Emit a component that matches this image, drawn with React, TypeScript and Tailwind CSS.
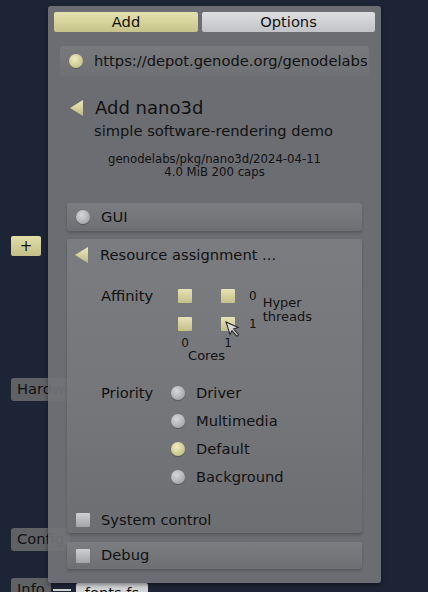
import React from "react";

const font = { fontFamily: '"DejaVu Sans", "Liberation Sans", sans-serif' };

function Triangle() {
  return (
    <svg width="13" height="16" viewBox="0 0 13 16" className="shrink-0">
      <defs>
        <linearGradient id="tri" x1="0" y1="0" x2="0" y2="1">
          <stop offset="0" stopColor="#eeeac0" />
          <stop offset="1" stopColor="#bdb982" />
        </linearGradient>
      </defs>
      <polygon points="13,0 13,16 0,8" fill="url(#tri)" />
    </svg>
  );
}

function Dot({ on }: { on?: boolean }) {
  return (
    <div
      className={
        "w-[14px] h-[14px] rounded-full shrink-0 shadow-[0_1px_1px_rgba(0,0,0,0.25)] " +
        (on
          ? "bg-[radial-gradient(circle_at_40%_35%,#f0ecc0,#c8c48c_70%,#aeaa74)]"
          : "bg-[radial-gradient(circle_at_40%_35%,#d6d7d9,#a9aaad_70%,#909194)]")
      }
    />
  );
}

function Square({ on }: { on?: boolean }) {
  return (
    <div
      className={
        "w-[14px] h-[14px] shrink-0 rounded-[1px] " +
        (on
          ? "bg-gradient-to-b from-[#e6e2b4] to-[#c4c08a]"
          : "bg-gradient-to-b from-[#cfd0d2] to-[#a3a4a7]")
      }
    />
  );
}

function Box({ className = "", children }: { className?: string; children: React.ReactNode }) {
  return (
    <div
      className={
        "mx-[19px] rounded-[3px] bg-gradient-to-b from-[#7b7c80] via-[#76777b] to-[#6d6e72] shadow-[0_2px_3px_rgba(0,0,0,0.2)] " +
        className
      }
    >
      {children}
    </div>
  );
}

function Cursor() {
  return (
    <svg width="14" height="20" viewBox="0 0 14 20" className="absolute left-[225px] top-[321px]">
      <polygon
        points="1,1 1,14 4,11 7,18 9,17 6,10 11,10"
        transform="rotate(-18 1 1)"
        fill="#d8d8d8"
        stroke="#222"
        strokeWidth="1"
      />
    </svg>
  );
}

export default function App() {
  const priorities = ["Driver", "Multimedia", "Default", "Background"];
  return (
    <div
      className="relative w-[428px] h-[592px] overflow-hidden bg-[#1d2435] text-[#111] text-[14.7px]"
      style={font}
    >
      {/* desktop items behind the dialog */}
      <div className="absolute left-[11px] top-[236px] w-[30px] h-[20px] rounded-[2px] bg-gradient-to-b from-[#e2dfaa] to-[#c2be86] flex items-center justify-center text-[15px] leading-none">
        +
      </div>
      <div className="absolute left-[11px] top-[378px] h-[23px] px-[6px] rounded-[3px] bg-[#606165] flex items-center">
        Hardware
      </div>
      <div className="absolute left-[11px] top-[528px] h-[23px] px-[6px] rounded-[3px] bg-[#606165] flex items-center">
        Config
      </div>
      <div className="absolute left-[11px] top-[578px] h-[23px] px-[6px] rounded-[3px] bg-[#606165] flex items-center">
        Info
      </div>
      <div className="absolute left-[53px] top-[589px] w-[18px] h-[2px] bg-[#d0d0d0]" />
      <div className="absolute left-[76px] top-[583px] w-[72px] h-[20px] rounded-[2px] bg-[#d3d4d6] flex items-center justify-center">
        fonts fs
      </div>

      {/* dialog */}
      <div className="absolute left-[48px] top-[6px] w-[333px] h-[577px] rounded-[3px] bg-[rgba(114,115,119,0.93)] shadow-[0_2px_4px_rgba(0,0,0,0.4)] flex flex-col">
        <div className="flex gap-[4px] px-[6px] pt-[6px]">
          <div className="w-[144px] h-[20px] rounded-[2px] bg-gradient-to-b from-[#e4e1b0] via-[#d6d39c] to-[#c6c28a] flex items-center justify-center">
            Add
          </div>
          <div className="flex-1 h-[20px] rounded-[2px] bg-gradient-to-b from-[#dddee0] via-[#d0d1d4] to-[#c2c3c6] flex items-center justify-center">
            Options
          </div>
        </div>

        <div className="mx-[12px] mt-[14px] h-[30px] rounded-[3px] bg-gradient-to-b from-[#78797d] to-[#707175] flex items-center pl-[9px] gap-[11px]">
          <Dot on />
          <span>https://depot.genode.org/genodelabs</span>
        </div>

        <div className="mt-[21px] ml-[22px] h-[22px] flex items-center gap-[12px]">
          <Triangle />
          <span className="text-[18px] leading-none">Add nano3d</span>
        </div>
        <div className="ml-[46px] h-[18px] mt-[3px] flex items-center">
          simple software-rendering demo
        </div>
        <div className="mt-[13px] text-center text-[11.7px] leading-[13px]">
          <div>genodelabs/pkg/nano3d/2024-04-11</div>
          <div>4.0 MiB 200 caps</div>
        </div>

        <Box className="mt-[24px] h-[28px] flex items-center pl-[9px] gap-[11px]">
          <Dot />
          <span>GUI</span>
        </Box>

        <Box className="mt-[8px] h-[294px] flex flex-col">
          <div className="h-[32px] flex items-center pl-[8px] gap-[12px]">
            <Triangle />
            <span>Resource assignment ...</span>
          </div>

          {/* affinity */}
          <div className="mt-[18px] flex pl-[34px]">
            <div className="w-[77px] h-[14px] flex items-center">Affinity</div>
            <div className="flex flex-col">
              <div className="flex items-center">
                <div className="grid grid-cols-[14px_14px] gap-x-[29px] gap-y-[14px]">
                  <Square on />
                  <Square on />
                  <Square on />
                  <Square on />
                </div>
                <div className="ml-[14px] flex flex-col gap-[14px] text-[12px]">
                  <div className="h-[14px] flex items-center">0</div>
                  <div className="h-[14px] flex items-center">1</div>
                </div>
                <div className="ml-[6px] text-[13px] leading-[14px]">
                  <div>Hyper</div>
                  <div>threads</div>
                </div>
              </div>
              <div className="mt-[6px] w-[57px] flex justify-between text-[12px] leading-[12px]">
                <span className="w-[14px] text-center">0</span>
                <span className="w-[14px] text-center">1</span>
              </div>
              <div className="w-[57px] mt-[1px] text-center text-[13px] leading-[12px]">Cores</div>
            </div>
          </div>

          {/* priority */}
          <div className="mt-[17px] flex pl-[34px]">
            <div className="w-[70px] h-[28px] flex items-center">Priority</div>
            <div className="flex flex-col">
              {priorities.map((p) => (
                <div key={p} className="h-[28px] flex items-center gap-[11px]">
                  <Dot on={p === "Default"} />
                  <span>{p}</span>
                </div>
              ))}
            </div>
          </div>

          <div className="mt-[16px] h-[26px] flex items-center pl-[9px] gap-[11px]">
            <Square />
            <span>System control</span>
          </div>
        </Box>

        <Box className="mt-[9px] h-[27px] flex items-center pl-[9px] gap-[11px]">
          <Square />
          <span>Debug</span>
        </Box>
      </div>

      <Cursor />
    </div>
  );
}
